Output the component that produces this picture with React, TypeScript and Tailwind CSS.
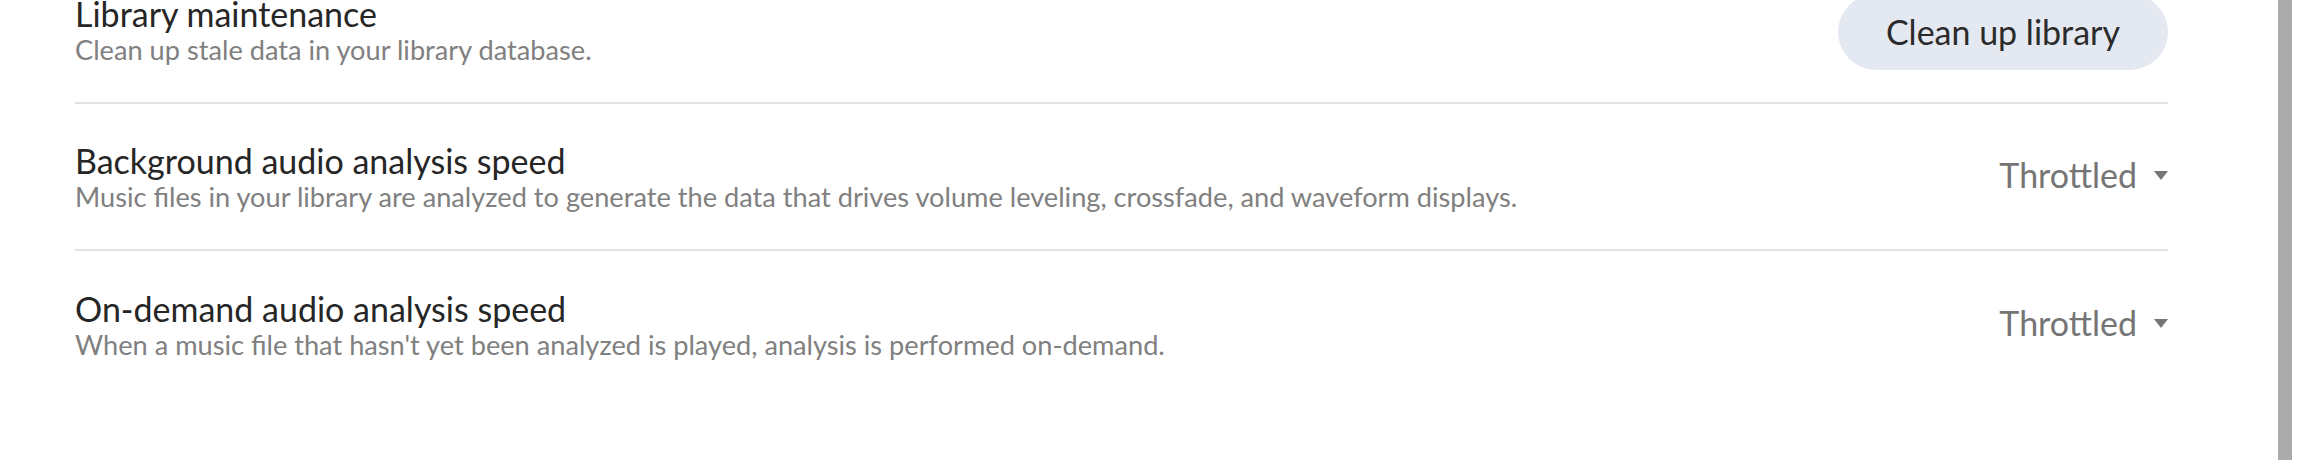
import { useState } from "react";

type Setting = {
  id: string;
  title: string;
  description: string;
  kind: "button" | "select";
  value?: string;
  action?: string;
};

const settings: Setting[] = [
  {
    id: "maintenance",
    title: "Library maintenance",
    description: "Clean up stale data in your library database.",
    kind: "button",
    action: "Clean up library",
  },
  {
    id: "background",
    title: "Background audio analysis speed",
    description:
      "Music files in your library are analyzed to generate the data that drives volume leveling, crossfade, and waveform displays.",
    kind: "select",
    value: "Throttled",
  },
  {
    id: "on-demand",
    title: "On-demand audio analysis speed",
    description:
      "When a music file that hasn't yet been analyzed is played, analysis is performed on-demand.",
    kind: "select",
    value: "Throttled",
  },
];

function Caret() {
  return (
    <svg width="14" height="9" viewBox="0 0 14 9" className="ml-[17px] mt-[2px]">
      <path d="M0 0 H14 L7 9 Z" fill="#757575" />
    </svg>
  );
}

export default function App() {
  const [values] = useState<Record<string, string>>({
    background: "Throttled",
    "on-demand": "Throttled",
  });

  return (
    <div
      className="flex h-[460px] w-[2308px] overflow-hidden bg-white"
      style={{ fontFamily: "Lato, 'Noto Sans', sans-serif" }}
    >
      <div className="flex-1 pl-[75px] pr-[110px]">
        <div className="mt-[-43px]">
          {settings.map((s, i) => (
            <div
              key={s.id}
              className={
                "flex h-[147px] items-center justify-between" +
                (i < settings.length - 1 ? " border-b-2 border-[#e2e2e2]" : "")
              }
            >
              <div className="flex flex-col">
                <div className="text-[34px] leading-[40px] text-[#262626]">
                  {s.title}
                </div>
                <div className="text-[27.2px] leading-[32px] text-[#808080]">
                  {s.description}
                </div>
              </div>

              {s.kind === "button" ? (
                <button
                  type="button"
                  className="mt-[4px] h-[76px] rounded-full bg-[#e4e8f1] px-[48px] text-[34px] text-[#2b2b2b]"
                >
                  {s.action}
                </button>
              ) : (
                <div className="mb-[5px] flex items-center text-[34px] text-[#757575]">
                  <span>{values[s.id] ?? s.value}</span>
                  <Caret />
                </div>
              )}
            </div>
          ))}
        </div>
      </div>
      <div className="w-[14px] bg-[#ababab]" />
      <div className="w-[16px]" />
    </div>
  );
}
